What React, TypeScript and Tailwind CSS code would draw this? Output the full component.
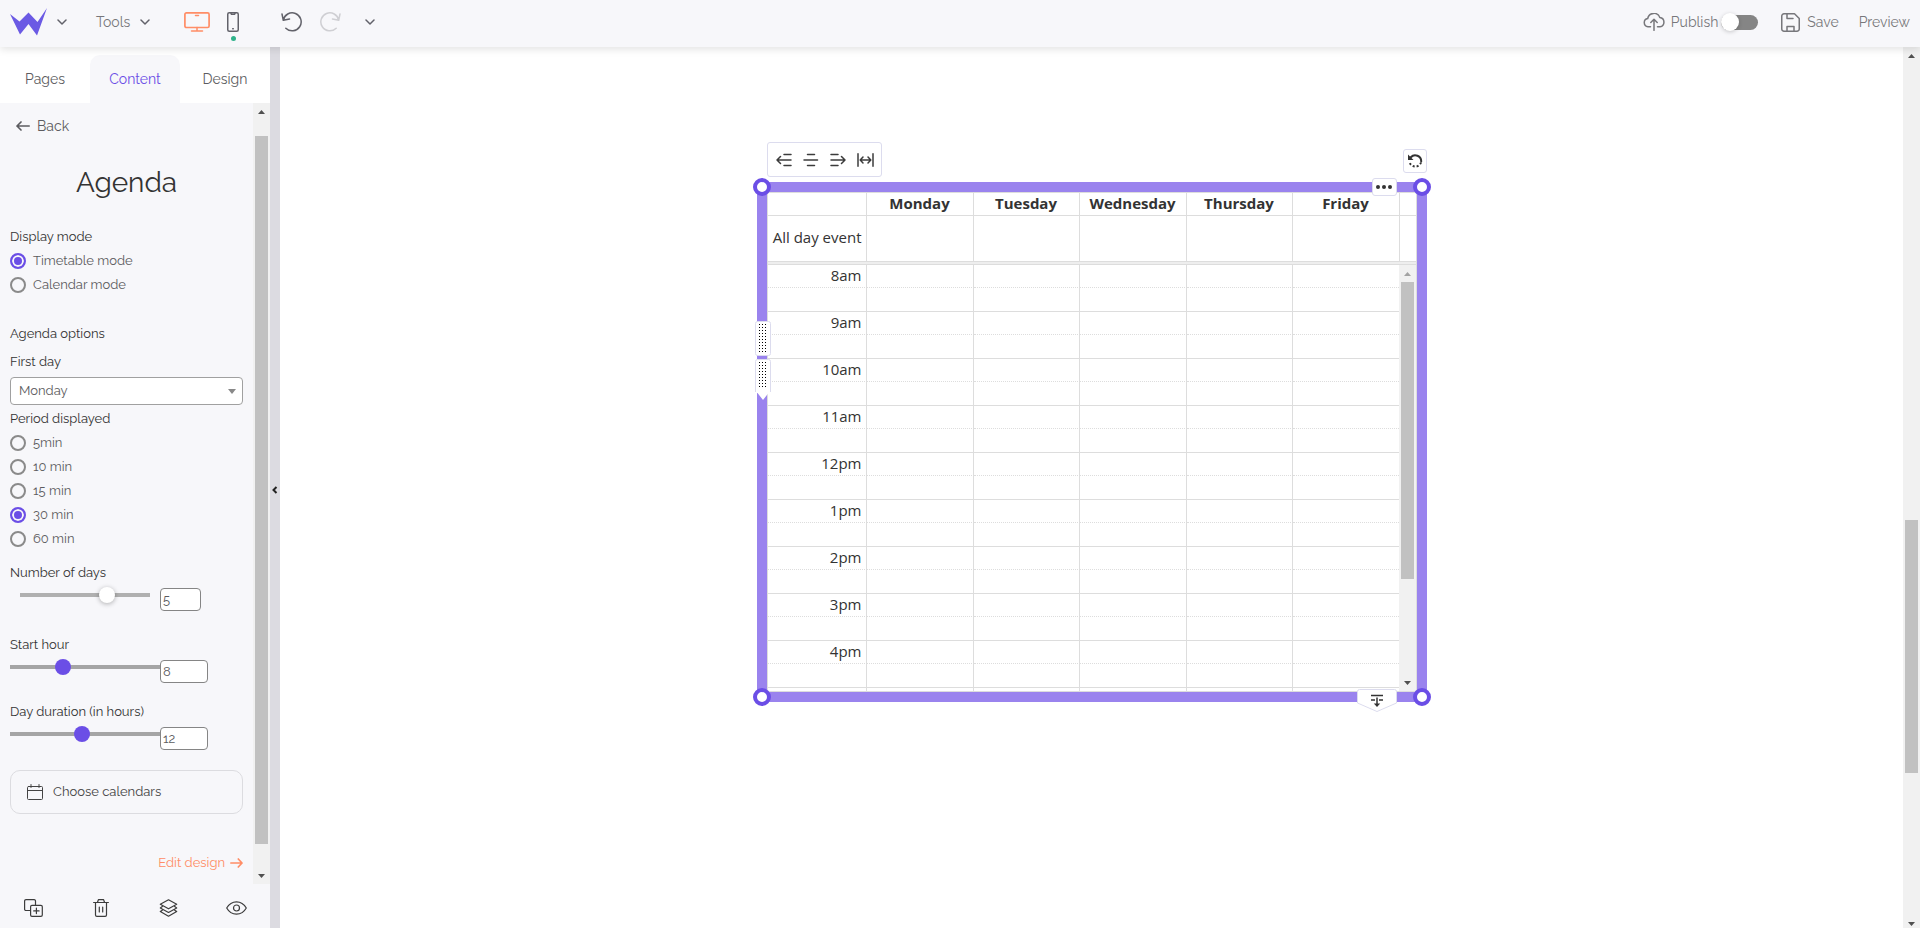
import React, { useState } from "react";

type IconProps = { className?: string; children: React.ReactNode; box: string };

function Icon({ className = "", children, box }: IconProps) {
  return (
    <svg
      aria-hidden="true"
      viewBox={box}
      className={`shrink-0 ${className}`}
      fill="none"
      stroke="currentColor"
      strokeWidth="1.5"
      strokeLinecap="round"
      strokeLinejoin="round"
    >
      {children}
    </svg>
  );
}

function Chevron() {
  return (
    <Icon box="0 0 10 6" className="h-[6px] w-[10px]">
      <path d="M1 1l4 4 4-4" />
    </Icon>
  );
}

function ScrollArrow({ up = false, muted = false }: { up?: boolean; muted?: boolean }) {
  return (
    <span className={`flex h-[17px] shrink-0 items-center justify-center ${muted ? "text-[#a3a3a3]" : "text-[#505050]"}`}>
      <svg aria-hidden="true" viewBox="0 0 7 4" className="h-1 w-[7px]" fill="currentColor">
        <path d={up ? "M0 4L3.5 0 7 4z" : "M0 0h7L3.5 4z"} />
      </svg>
    </span>
  );
}

function ScrollBar({ before, thumb, after, className = "", atTop = false }: {
  before: string;
  thumb: string;
  after: string;
  className?: string;
  atTop?: boolean;
}) {
  return (
    <div aria-hidden="true" className={`flex w-[17px] shrink-0 flex-col bg-[#f1f1f1] ${className}`}>
      <ScrollArrow up muted={atTop} />
      <div className="flex min-h-0 flex-1 flex-col px-[2px]">
        <span className={before} />
        <span className={`bg-[#c1c1c1] ${thumb}`} />
        <span className={after} />
      </div>
      <ScrollArrow />
    </div>
  );
}

function Header() {
  return (
    <header className="relative z-20 flex h-[47px] shrink-0 items-center justify-between bg-[#f7f7fa] pr-[10px] pl-[10px] text-sm text-[#77777b] shadow-[0_2px_8px_rgba(0,0,0,0.12)]">
      <div className="flex h-full items-center pb-[3px] text-[#62626a]">
        <button type="button" aria-label="Main menu" className="flex items-center gap-[10px]">
          <svg aria-hidden="true" viewBox="0 0 37 28" className="h-7 w-[37px]" fill="#6b5ae4">
            <path d="M0 6l9.500 7.500L18.500 4.500 27.500 14 37 0 27 27.500 18.500 16 10 26.500z" />
          </svg>
          <Chevron />
        </button>
        <button type="button" className="ml-[29px] flex items-center gap-[10px]">
          <span className="text-[#77777b]">Tools</span>
          <Chevron />
        </button>
        <button type="button" aria-label="Desktop view" className="ml-[34px] text-[#ff8d66]">
          <Icon box="0 0 26 20" className="h-5 w-[26px]">
            <rect x="0.9" y="0.9" width="24.200" height="14.600" rx="1.500" strokeWidth="1.700" />
            <path d="M11.500 3.500h3M13 15.500v3.300M7.500 19h11" />
          </Icon>
        </button>
        <button type="button" aria-label="Mobile view" className="relative ml-[17px]">
          <Icon box="0 0 12 20" className="h-5 w-3">
            <rect x="0.75" y="0.75" width="10.500" height="18.500" rx="1.500" />
            <path d="M4 1.300l.5 1h3l.5-1M5.700 16.700h.6" />
          </Icon>
          <span className="absolute top-[24px] left-[4px] size-[5px] rounded-full bg-[#2fb28a]" />
        </button>
        <button type="button" aria-label="Undo" className="ml-[42px]">
          <Icon box="0 0 21 20" className="h-5 w-[21px]">
            <path d="M1 2l1.300 6.300L8.500 7M2.300 8.300A9 9 0 1 1 4.800 16.200" />
          </Icon>
        </button>
        <button type="button" aria-label="Redo" className="ml-[18px] text-[#cfcfd3]">
          <Icon box="0 0 21 20" className="h-5 w-[21px]">
            <path d="M20 2l-1.300 6.300L12.500 7M18.700 8.300A9 9 0 1 0 16.200 16.200" />
          </Icon>
        </button>
        <button type="button" aria-label="History" className="ml-[24px]">
          <Chevron />
        </button>
      </div>
      <div className="flex h-full items-center pb-[3px]">
        <label htmlFor="publish" className="flex items-center gap-[6px]">
          <Icon box="0 0 22 18" className="h-[18px] w-[22px]">
            <path d="M7.500 13.800H5A4.200 4.200 0 0 1 4.700 5.500 6.300 6.300 0 0 1 16.800 4.500 4.700 4.700 0 0 1 17 13.800h-2.500M11 17.300V6.500M7.800 9.500L11 6.300l3.200 3.200" />
          </Icon>
          Publish
        </label>
        <input
          id="publish"
          type="checkbox"
          role="switch"
          className="ml-[3px] h-[15px] w-[37px] appearance-none rounded-full bg-[#858585] before:-mt-[2px] before:block before:size-[18px] before:rounded-full before:bg-white before:shadow-[0_1px_4px_rgba(0,0,0,0.2)] checked:before:ml-auto"
        />
        <button type="button" className="ml-[23px] flex items-center gap-[7px]">
          <Icon box="0 0 19 19" className="size-[19px]">
            <path d="M3 .75h10.500L18.250 5.500V16a2.250 2.250 0 0 1-2.250 2.250H3A2.250 2.250 0 0 1 .75 16V3A2.250 2.250 0 0 1 3 .75zM6 1v4.500h6M6 18v-4.500h7V18" />
          </Icon>
          Save
        </button>
        <button type="button" className="ml-5">Preview</button>
      </div>
    </header>
  );
}

function Tabs() {
  return (
    <nav className="grid h-14 shrink-0 grid-cols-3 items-end bg-white text-sm text-[#5c5c60]">
      <button type="button" className="h-12">Pages</button>
      <button type="button" className="relative h-12 rounded-t-[10px] bg-[#f7f7fa] text-[#6b4ee6] before:absolute before:bottom-0 before:-left-[9px] before:size-[9px] before:rounded-br-[8px] before:bg-white after:absolute after:-right-[9px] after:bottom-0 after:size-[9px] after:rounded-bl-[8px] after:bg-white">
        Content
      </button>
      <button type="button" className="h-12">Design</button>
    </nav>
  );
}

function RadioGroup({ legend, name, options, initial, className = "" }: {
  legend: string;
  name: string;
  options: string[];
  initial: string;
  className?: string;
}) {
  const [value, setValue] = useState(initial);
  return (
    <div role="radiogroup" aria-label={legend} className={className}>
      <div className="flex h-6 items-center text-[#333]">{legend}</div>
      {options.map((option) => (
        <label key={option} className="flex h-6 items-center gap-[7px]">
          <input
            type="radio"
            name={name}
            checked={value === option}
            onChange={() => setValue(option)}
            className="size-4 appearance-none rounded-full border-2 border-[#8a8a8a] checked:border-[#6b4ee6] checked:bg-[#6b4ee6] checked:shadow-[inset_0_0_0_2px_#f7f7fa]"
          />
          {option}
        </label>
      ))}
    </div>
  );
}

function SliderField({ id, label, min, max, initial, soft = false, className }: {
  id: string;
  label: string;
  min: number;
  max: number;
  initial: number;
  soft?: boolean;
  className: string;
}) {
  const [value, setValue] = useState(initial);
  return (
    <div className={className}>
      <label htmlFor={id} className="flex h-6 items-center text-[#333]">{label}</label>
      <div className="mt-[2px] flex items-start">
        <input
          id={id}
          type="range"
          min={min}
          max={max}
          value={value}
          onChange={(e) => setValue(Number(e.target.value))}
          className={
            soft
              ? "mr-[2px] ml-[2px] h-4 w-[146px] appearance-none bg-[linear-gradient(#b0b0b0,#b0b0b0)] bg-[length:130px_4px] bg-center bg-no-repeat [&::-webkit-slider-thumb]:size-4 [&::-webkit-slider-thumb]:appearance-none [&::-webkit-slider-thumb]:rounded-full [&::-webkit-slider-thumb]:bg-white [&::-webkit-slider-thumb]:shadow-[0_1px_5px_rgba(0,0,0,0.3)]"
              : "h-4 w-[150px] appearance-none bg-[linear-gradient(#a5a5a5,#a5a5a5)] bg-[length:150px_4px] bg-center bg-no-repeat [&::-webkit-slider-thumb]:size-4 [&::-webkit-slider-thumb]:appearance-none [&::-webkit-slider-thumb]:rounded-full [&::-webkit-slider-thumb]:bg-[#6b4ee6]"
          }
        />
        <input
          type="text"
          inputMode="numeric"
          aria-label={`${label} value`}
          value={value}
          onChange={(e) => setValue(Number(e.target.value) || min)}
          className={`mt-[1px] h-[23px] rounded-[4px] border border-[#858585] bg-white px-[2px] oldstyle-nums ${soft ? "w-[41px]" : "w-12"}`}
        />
      </div>
    </div>
  );
}

function Sidebar() {
  return (
    <aside className="flex w-[270px] shrink-0 flex-col bg-[#f7f7fa] text-[13px] text-[#5c5c60] oldstyle-nums">
      <Tabs />
      <div className="flex min-h-0 flex-1">
        <div className="min-w-0 flex-1 overflow-hidden px-[10px]">
          <button type="button" className="flex h-[46px] items-center gap-[7px] pl-[6px] text-sm">
            <Icon box="0 0 14 10" className="h-[10px] w-[14px]">
              <path d="M13.200 5H1M5 1L1 5l4 4" strokeWidth="1.700" />
            </Icon>
            Back
          </button>
          <h1 className="flex h-[68px] items-center justify-center text-[28px] text-[#333]">Agenda</h1>
          <RadioGroup
            legend="Display mode"
            name="mode"
            options={["Timetable mode", "Calendar mode"]}
            initial="Timetable mode"
            className="mt-2"
          />
          <h2 className="mt-[25px] flex h-6 items-center text-[#333]">Agenda options</h2>
          <label htmlFor="first-day" className="mt-1 flex h-6 items-center text-[#333]">First day</label>
          <div className="mt-[3px] grid items-center">
            <select
              id="first-day"
              defaultValue="Monday"
              className="col-start-1 row-start-1 h-7 w-full appearance-none rounded-[4px] border border-[#a0a0a0] bg-white px-2"
            >
              <option>Monday</option>
              <option>Tuesday</option>
              <option>Wednesday</option>
              <option>Thursday</option>
              <option>Friday</option>
              <option>Saturday</option>
              <option>Sunday</option>
            </select>
            <svg
              aria-hidden="true"
              viewBox="0 0 8 5"
              className="pointer-events-none col-start-1 row-start-1 mr-[7px] h-[5px] w-2 justify-self-end"
              fill="#888"
            >
              <path d="M0 0h8L4 5z" />
            </svg>
          </div>
          <RadioGroup
            legend="Period displayed"
            name="period"
            options={["5min", "10 min", "15 min", "30 min", "60 min"]}
            initial="30 min"
            className="mt-[2px]"
          />
          <SliderField id="days" label="Number of days" min={1} max={7} initial={5} soft className="mt-[10px]" />
          <SliderField id="start" label="Start hour" min={0} max={24} initial={8} className="mt-[22px]" />
          <SliderField id="duration" label="Day duration (in hours)" min={1} max={24} initial={12} className="mt-[17px]" />
          <button
            type="button"
            className="mt-5 flex h-11 w-full items-center gap-[10px] rounded-[10px] border border-[#dcdce0] px-4 text-[#444]"
          >
            <Icon box="0 0 16 16" className="size-4">
              <path d="M1.500 2.500h13a1 1 0 0 1 1 1v11a1 1 0 0 1-1 1h-13a1 1 0 0 1-1-1v-11a1 1 0 0 1 1-1zM.5 6.500h15M4 .5v3M12 .5v3" strokeWidth="1" />
            </Icon>
            Choose calendars
          </button>
          <div className="mt-[37px] flex h-6 justify-end">
            <a href="#design" className="flex items-center gap-[5px] text-[#ff8d66]">
              Edit design
              <Icon box="0 0 13 10" className="h-[10px] w-[13px]">
                <path d="M.8 5H12M8.300 1L12 5 8.300 9" strokeWidth="1.700" />
              </Icon>
            </a>
          </div>
        </div>
        <ScrollBar before="flex-[16]" thumb="flex-[708]" after="flex-[23]" />
      </div>
      <div className="grid h-11 shrink-0 grid-cols-4 place-items-center pt-1 text-[#3c3c3c]">
        <button type="button" aria-label="Duplicate">
          <Icon box="0 0 19 18" className="h-[18px] w-[19px]">
            <path d="M6.500 11.500H2A1.400 1.400 0 0 1 .6 10V2A1.400 1.400 0 0 1 2 .6h8A1.400 1.400 0 0 1 11.500 2v4.300M8 6.400h8.900a1.400 1.400 0 0 1 1.400 1.400v8.200a1.400 1.400 0 0 1-1.400 1.400H8A1.400 1.400 0 0 1 6.600 16V7.800A1.400 1.400 0 0 1 8 6.400zM12.400 9.200v5.400M9.700 11.900h5.400" strokeWidth="1.200" />
          </Icon>
        </button>
        <button type="button" aria-label="Delete">
          <Icon box="0 0 16 18" className="h-[18px] w-4">
            <path d="M.6 3.500h14.800M2.500 3.500V16a1.400 1.400 0 0 0 1.400 1.400h8.200a1.400 1.400 0 0 0 1.400-1.400V3.500M4.500 3.300L5.400.7h5.200l.9 2.600M6.300 8v5M9.700 8v5" strokeWidth="1.200" />
          </Icon>
        </button>
        <button type="button" aria-label="Layers">
          <Icon box="0 0 19 18" className="h-[18px] w-[19px]">
            <path d="M9.500.8l8.200 4.500-8.200 4.500-8.200-4.500zM3.300 7.600L1.300 9l8.200 4.500L17.700 9l-2-1.400M3.300 11.200l-2 1.400 8.200 4.600 8.200-4.600-2-1.400" strokeWidth="1.200" />
          </Icon>
        </button>
        <button type="button" aria-label="Toggle visibility">
          <Icon box="0 0 21 14" className="h-[14px] w-[21px]">
            <path d="M.7 7C3 3 6.500.8 10.500.8S18 3 20.300 7c-2.300 4-5.800 6.200-9.800 6.200S3 11 .7 7z" strokeWidth="1.200" />
            <circle cx="10.500" cy="7" r="3" strokeWidth="1.200" />
          </Icon>
        </button>
      </div>
    </aside>
  );
}

const DAYS = ["Monday", "Tuesday", "Wednesday", "Thursday", "Friday"];
const HOURS = ["8am", "9am", "10am", "11am", "12pm", "1pm", "2pm", "3pm", "4pm"];

function Columns() {
  return (
    <colgroup>
      <col className="w-[99px]" />
      <col className="w-[107px]" />
      <col className="w-[106px]" />
      <col className="w-[107px]" />
      <col className="w-[106px]" />
      <col />
    </colgroup>
  );
}

function Timetable() {
  return (
    <div className="flex h-[500px] flex-col border border-[#ddd] bg-white font-['Open_Sans',sans-serif] text-[15px] leading-5 text-[#333]">
      <div className="flex">
        <div className="min-w-0 flex-1">
          <table className="w-full table-fixed border-separate border-spacing-0">
            <Columns />
            <thead>
              <tr>
                <td className="h-[23px] border-r border-b border-[#ddd] p-0" />
                {DAYS.map((day) => (
                  <th key={day} scope="col" className="h-[23px] border-r border-b border-[#ddd] p-0 pb-[2px] font-bold last:border-r-0">
                    {day}
                  </th>
                ))}
              </tr>
            </thead>
            <tbody>
              <tr>
                <th scope="row" className="h-[45px] border-r border-[#ddd] p-0 pr-1 pb-1 text-right font-normal whitespace-nowrap">
                  All day event
                </th>
                {DAYS.map((day) => (
                  <td key={day} className="border-r border-[#ddd] p-0 last:border-r-0" />
                ))}
              </tr>
            </tbody>
          </table>
        </div>
        <div className="flex w-[17px] flex-col border-l border-[#ddd]">
          <span className="h-[23px] border-b border-[#ddd]" />
        </div>
      </div>
      <div className="h-1 shrink-0 border-y border-[#ddd] bg-[#eee]" />
      <div className="flex min-h-0 flex-1">
        <div className="min-w-0 flex-1 overflow-hidden">
          <table className="w-full table-fixed border-separate border-spacing-0">
            <Columns />
            <tbody>
              {HOURS.map((hour) => (
                <React.Fragment key={hour}>
                  <tr>
                    <th scope="row" className="h-[23px] border-r border-b border-[#ddd] p-0 pr-1 pb-[2px] text-right font-normal [border-bottom-style:dotted]">
                      {hour}
                    </th>
                    {DAYS.map((day) => (
                      <td key={day} className="border-r border-b border-[#ddd] p-0 [border-bottom-style:dotted] last:border-r-0" />
                    ))}
                  </tr>
                  <tr>
                    <td className="h-6 border-r border-b border-[#ddd] p-0" />
                    {DAYS.map((day) => (
                      <td key={day} className="border-r border-b border-[#ddd] p-0 last:border-r-0" />
                    ))}
                  </tr>
                </React.Fragment>
              ))}
              <tr>
                <td className="h-1 border-r border-[#ddd] p-0" />
                {DAYS.map((day) => (
                  <td key={day} className="border-r border-[#ddd] p-0 last:border-r-0" />
                ))}
              </tr>
            </tbody>
          </table>
        </div>
        <ScrollBar atTop before="flex-none" thumb="flex-[297]" after="flex-[95]" />
      </div>
    </div>
  );
}

function Grip({ pointed = false }: { pointed?: boolean }) {
  const rows = Array.from({ length: pointed ? 9 : 10 }, (_, i) => i);
  return (
    <svg aria-hidden="true" viewBox={pointed ? "0 0 16 41" : "0 0 16 35"} className={pointed ? "h-[41px] w-4" : "h-[35px] w-4"}>
      {pointed ? (
        <path d="M2 0h12q2 0 2 2v32h-2.500L8 41 2.500 34H0V2q0-2 2-2z" fill="#fff" />
      ) : (
        <rect x=".5" y=".5" width="15" height="34" rx="2" fill="#fff" stroke="#dcdcee" />
      )}
      {pointed && <path d="M.5 33V2.500Q.5.5 2.500.5h11q2 0 2 2V33" fill="none" stroke="#dcdcee" />}
      {rows.map((r) =>
        [4, 7, 10].map((x) => <rect key={`${r}-${x}`} x={x} y={3 + r * 3} width="1" height="1" fill="#000" />)
      )}
    </svg>
  );
}

function AgendaWidget() {
  const handle = "absolute size-[18px] rounded-full border-4 border-[#6b4ee6] bg-white";
  return (
    <section aria-label="Agenda" className="mx-auto mt-[95px] w-[670px]">
      <div className="mb-[5px] flex items-end justify-between pl-[10px]">
        <div className="flex h-[35px] items-center gap-[11px] rounded-[3px] border border-[#dcdcee] bg-white pr-[7px] pl-2 text-[#3c3c3c]">
          <button type="button" aria-label="Align left">
            <Icon box="0 0 16 14" className="h-[14px] w-4">
              <path d="M8 1.500h7M1 7h14M8 12.500h7M4.500 3.500L1 7l3.500 3.500" />
            </Icon>
          </button>
          <button type="button" aria-label="Align center">
            <Icon box="0 0 16 14" className="h-[14px] w-4">
              <path d="M4.500 1.500h7M1 7h13.500M4.500 12.500h7" />
            </Icon>
          </button>
          <button type="button" aria-label="Align right">
            <Icon box="0 0 16 14" className="h-[14px] w-4">
              <path d="M1 1.500h7M1 7h14M1 12.500h7M11.500 3.500L15 7l-3.500 3.500" />
            </Icon>
          </button>
          <button type="button" aria-label="Full width">
            <Icon box="0 0 17 14" className="h-[14px] w-[17px]">
              <path d="M1 .8v12.400M16 .8v12.400M3.500 7h10M6 4L3.200 7 6 10M11 4l2.800 3L11 10" />
            </Icon>
          </button>
        </div>
        <button
          type="button"
          aria-label="Rotate"
          className="mb-1 flex size-6 items-center justify-center rounded-[3px] border border-[#dcdcee] bg-white text-[#333]"
        >
          <Icon box="0 0 16 16" className="size-4">
            <path d="M3.800 4.200A6 6 0 0 1 14.200 8.500" strokeWidth="2" />
            <path d="M14 9.500A6 6 0 0 1 2.500 9" strokeWidth="2" strokeLinecap="butt" strokeDasharray="2 2" />
            <path d="M1 1.500v5.500h5.500z" fill="currentColor" stroke="none" />
          </Icon>
        </button>
      </div>
      <div className="relative border-[10px] border-[#9a83ee]">
        <Timetable />
        <span className={`${handle} -top-[14px] -left-[14px]`} />
        <span className={`${handle} -top-[14px] -right-[14px]`} />
        <span className={`${handle} -bottom-[14px] -left-[14px]`} />
        <span className={`${handle} -right-[14px] -bottom-[14px]`} />
        <button
          type="button"
          aria-label="More options"
          className="absolute -top-[14px] right-[20px] flex h-[18px] w-[25px] items-center justify-center rounded-[3px] border border-[#dcdcee] bg-white"
        >
          <svg aria-hidden="true" viewBox="0 0 16 4" className="h-1 w-4" fill="#333">
            <circle cx="2" cy="2" r="2" />
            <circle cx="8" cy="2" r="2" />
            <circle cx="14" cy="2" r="2" />
          </svg>
        </button>
        <div className="absolute top-[129px] -left-[12px] flex flex-col gap-[3px]">
          <button type="button" aria-label="Move"><Grip /></button>
          <button type="button" aria-label="Move with content below"><Grip pointed /></button>
        </div>
        <button type="button" aria-label="Push content down" className="absolute right-[20px] -bottom-[20px]">
          <svg aria-hidden="true" viewBox="0 0 40 23" className="h-[23px] w-10" fill="none">
            <path d="M.5 14V2.500q0-2 2-2h35q2 0 2 2V14L20 22.500z" fill="#fff" stroke="#dcdcee" />
            <path d="M14 6.500h12M14 11h4M22 11h4M20 8.500v7" stroke="#333" strokeWidth="1.500" />
            <path d="M16.800 14.500h6.400L20 18z" fill="#333" />
          </svg>
        </button>
      </div>
    </section>
  );
}

export default function App() {
  return (
    <div className="flex h-screen flex-col overflow-hidden bg-white font-[Raleway,Lato,sans-serif]">
      <Header />
      <div className="flex min-h-0 flex-1">
        <Sidebar />
        <button
          type="button"
          aria-label="Collapse panel"
          className="flex w-[10px] shrink-0 items-center justify-center bg-[#dcdbe1] pt-1 text-[#222]"
        >
          <Icon box="0 0 6 8" className="h-2 w-[6px]">
            <path d="M4.500 1L1.500 4l3 3" strokeWidth="2" strokeLinecap="butt" strokeLinejoin="miter" />
          </Icon>
        </button>
        <main className="min-w-0 flex-1 overflow-hidden">
          <AgendaWidget />
        </main>
        <ScrollBar before="flex-[456]" thumb="flex-[253]" after="flex-[142]" className="-mb-1" />
      </div>
    </div>
  );
}
